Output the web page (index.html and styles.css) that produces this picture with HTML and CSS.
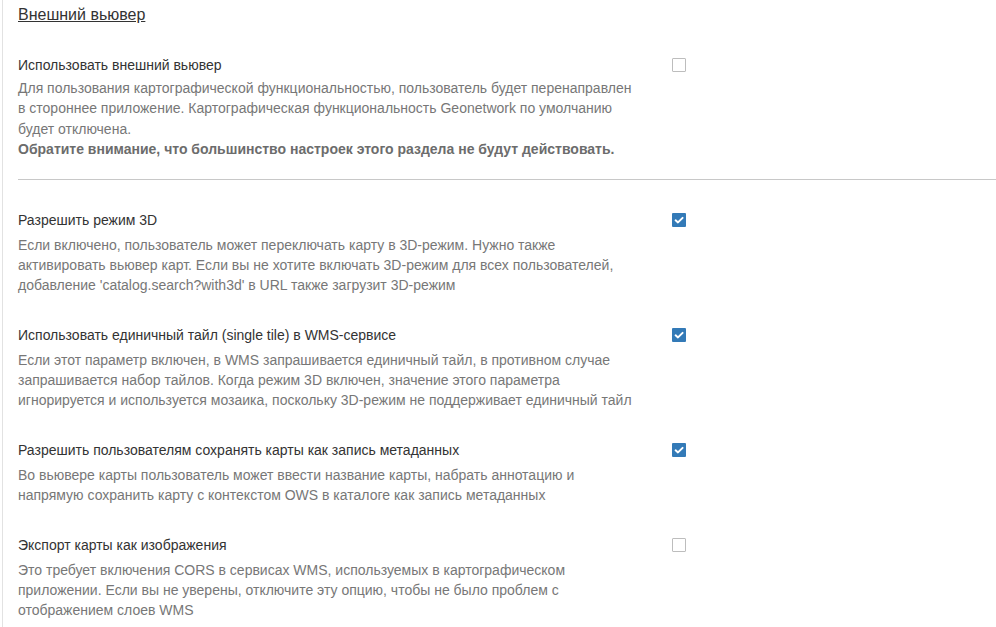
FILE: index.html
```html
<!DOCTYPE html>
<html lang="ru">
<head>
<meta charset="utf-8">
<title>Внешний вьювер</title>
<link rel="stylesheet" href="styles.css">
</head>
<body>
<div class="page">
  <h2 class="section-title">Внешний вьювер</h2>

  <div class="setting first">
    <div class="text">
      <div class="label">Использовать внешний вьювер</div>
      <p class="help">Для пользования картографической функциональностью, пользователь будет перенаправлен в стороннее приложение. Картографическая функциональность Geonetwork по умолчанию будет отключена.<br><strong>Обратите внимание, что большинство настроек этого раздела не будут действовать.</strong></p>
    </div>
    <div class="control"><span class="cb"></span></div>
  </div>

  <hr class="divider">

  <div class="setting">
    <div class="text">
      <div class="label">Разрешить режим 3D</div>
      <p class="help">Если включено, пользователь может переключать карту в 3D-режим. Нужно также активировать вьювер карт. Если вы не хотите включать 3D-режим для всех пользователей, добавление 'catalog.search?with3d' в URL также загрузит 3D-режим</p>
    </div>
    <div class="control"><span class="cb checked"><svg viewBox="0 0 14 14" width="14" height="14"><path d="M3.6 7.3 L6 9.4 L10.6 4.9" fill="none" stroke="#fff" stroke-width="2" stroke-linecap="round" stroke-linejoin="round"/></svg></span></div>
  </div>

  <div class="setting">
    <div class="text">
      <div class="label">Использовать единичный тайл (single tile) в WMS-сервисе</div>
      <p class="help">Если этот параметр включен, в WMS запрашивается единичный тайл, в противном случае запрашивается набор тайлов. Когда режим 3D включен, значение этого параметра игнорируется и используется мозаика, поскольку 3D-режим не поддерживает единичный тайл</p>
    </div>
    <div class="control"><span class="cb checked"><svg viewBox="0 0 14 14" width="14" height="14"><path d="M3.6 7.3 L6 9.4 L10.6 4.9" fill="none" stroke="#fff" stroke-width="2" stroke-linecap="round" stroke-linejoin="round"/></svg></span></div>
  </div>

  <div class="setting">
    <div class="text">
      <div class="label">Разрешить пользователям сохранять карты как запись метаданных</div>
      <p class="help">Во вьювере карты пользователь может ввести название карты, набрать аннотацию и напрямую сохранить карту с контекстом OWS в каталоге как запись метаданных</p>
    </div>
    <div class="control"><span class="cb checked"><svg viewBox="0 0 14 14" width="14" height="14"><path d="M3.6 7.3 L6 9.4 L10.6 4.9" fill="none" stroke="#fff" stroke-width="2" stroke-linecap="round" stroke-linejoin="round"/></svg></span></div>
  </div>

  <div class="setting">
    <div class="text">
      <div class="label">Экспорт карты как изображения</div>
      <p class="help">Это требует включения CORS в сервисах WMS, используемых в картографическом приложении. Если вы не уверены, отключите эту опцию, чтобы не было проблем с отображением слоев WMS</p>
    </div>
    <div class="control"><span class="cb"></span></div>
  </div>
</div>
</body>
</html>
```

FILE: styles.css
```css
html, body {
  margin: 0;
  padding: 0;
  background: #fff;
}

body {
  font-family: "Liberation Sans", Arial, sans-serif;
  font-size: 14px;
  line-height: 20px;
  color: #333;
  overflow: hidden;
}

.page {
  margin-left: 2px;
  border-left: 1px solid #e2e2e2;
  padding: 6px 0 0 15px;
  min-height: 627px;
  box-sizing: border-box;
}

.section-title {
  margin: 0;
  font-size: 16px;
  line-height: 18px;
  font-weight: normal;
  color: #333;
  text-decoration: underline;
}

.setting {
  display: flex;
  align-items: flex-start;
  margin-top: 30px;
}

.setting.first {
  margin-top: 31px;
}

.text {
  width: 618px;
  flex: none;
}

.label {
  color: #333;
  line-height: 20px;
}

.help {
  margin: 5px 0 0;
  color: #777;
  line-height: 20px;
}

.first .help {
  margin-top: 3px;
  line-height: 20.3px;
}

.help strong {
  font-weight: bold;
  color: #6c6c6c;
}

.control {
  margin-left: 36px;
  padding-top: 3px;
  display: flex;
}

.cb {
  display: block;
  width: 14px;
  height: 14px;
  box-sizing: border-box;
  border: 1px solid #bdbdbd;
  border-radius: 1px;
  background: #fff;
}

.cb.checked {
  border: none;
  background: #337ab7;
}

.cb svg {
  display: block;
}

.divider {
  margin: 20px -2px 0 0;
  border: 0;
  border-top: 1px solid #c8c8c8;
  height: 0;
}
```
